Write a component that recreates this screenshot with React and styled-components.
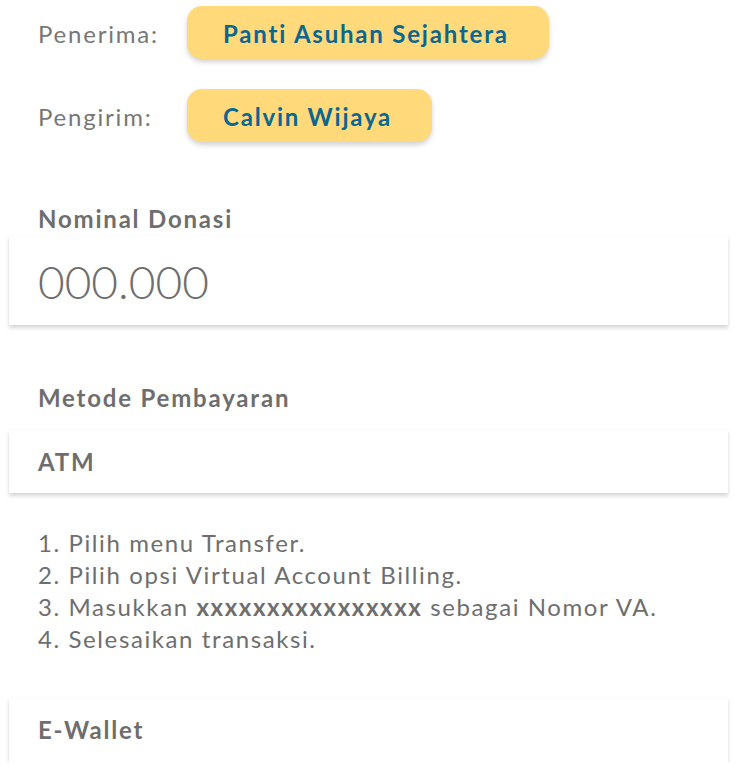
import React from "react";
import styled, { createGlobalStyle } from "styled-components";

const Global = createGlobalStyle`
  html, body { margin: 0; padding: 0; background: #fff; }
  body { font-family: "Lato", "Noto Sans", sans-serif; color: #6e6e6e; }
`;

const Page = styled.div`
  width: 738px;
  padding: 6px 10px 0 9px;
  box-sizing: border-box;
`;

const InfoRow = styled.div`
  display: flex;
  align-items: center;
  margin-bottom: ${(p) => p.$mb || 0}px;
`;

const InfoLabel = styled.div`
  flex: 0 0 178px;
  box-sizing: border-box;
  padding: 3px 0 0 29px;
  font-size: 24px;
  line-height: 28px;
  letter-spacing: 1.8px;
  color: #777;
`;

const Pill = styled.div`
  height: 53px;
  box-sizing: border-box;
  display: flex;
  align-items: center;
  padding: 3px 40px 0 36px;
  background: #ffd97a;
  border-radius: 15px;
  box-shadow: 0 3px 5px rgba(0, 0, 0, 0.18);
  color: #0b6690;
  font-size: 24px;
  line-height: 28px;
  font-weight: 700;
  letter-spacing: 1.8px;
`;

const SectionTitle = styled.div`
  padding-left: 29px;
  font-size: 24px;
  line-height: 28px;
  font-weight: 700;
  letter-spacing: 1.8px;
  color: #6e6e6e;
  margin-top: ${(p) => p.$mt}px;
  margin-bottom: ${(p) => p.$mb}px;
`;

const Card = styled.div`
  width: 719px;
  height: ${(p) => p.$h}px;
  box-sizing: border-box;
  padding: ${(p) => p.$pt || 0}px 0 0 29px;
  display: flex;
  align-items: center;
  background: #fff;
  box-shadow: 0 3px 4px rgba(0, 0, 0, 0.16), 0 0 2px rgba(0, 0, 0, 0.04);
  margin-top: ${(p) => p.$mt || 0}px;
`;

const Amount = styled.div`
  font-size: 46px;
  font-weight: 300;
  letter-spacing: 0;
  color: #6e6e6e;
`;

const CardTitle = styled.div`
  font-size: 24px;
  line-height: 28px;
  font-weight: 700;
  letter-spacing: 1.8px;
  color: #6e6e6e;
`;

const Steps = styled.ol`
  list-style: none;
  margin: 34px 0 0 0;
  padding: 0 0 0 29px;
  font-size: 24px;
  line-height: 32px;
  letter-spacing: 1.6px;
  color: #6e6e6e;
  b { font-weight: 700; }
`;

export default function App() {
  return (
    <>
      <Global />
      <Page>
        <InfoRow $mb={30}>
          <InfoLabel>Penerima:</InfoLabel>
          <Pill>Panti Asuhan Sejahtera</Pill>
        </InfoRow>
        <InfoRow>
          <InfoLabel>Pengirim:</InfoLabel>
          <Pill>Calvin Wijaya</Pill>
        </InfoRow>
        <SectionTitle $mt={63} $mb={3}>Nominal Donasi</SectionTitle>
        <Card $h={89} $pt={2}>
          <Amount>000.000</Amount>
        </Card>
        <SectionTitle $mt={59} $mb={18}>Metode Pembayaran</SectionTitle>
        <Card $h={63}>
          <CardTitle>ATM</CardTitle>
        </Card>
        <Steps>
          <li>1. Pilih menu Transfer.</li>
          <li>2. Pilih opsi Virtual Account Billing.</li>
          <li>3. Masukkan <b>xxxxxxxxxxxxxxxx</b> sebagai Nomor VA.</li>
          <li>4. Selesaikan transaksi.</li>
        </Steps>
        <Card $h={64} $mt={43}>
          <CardTitle>E-Wallet</CardTitle>
        </Card>
      </Page>
    </>
  );
}
